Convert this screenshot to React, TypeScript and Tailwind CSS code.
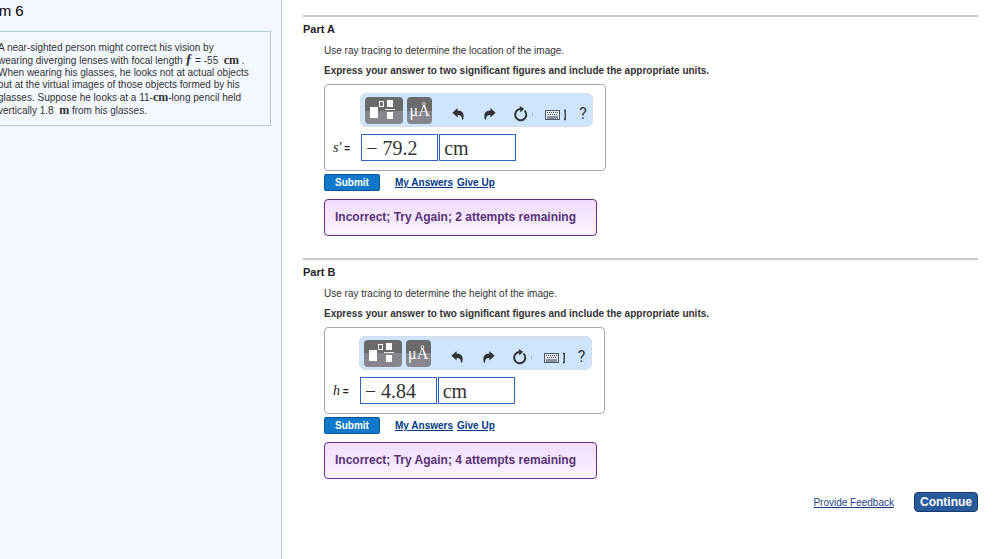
import type { ReactNode } from "react";

type PartProps = {
  id: string;
  title: string;
  question: string;
  symbol: ReactNode;
  value: string;
  unit: string;
  attempts: number;
};

function TemplateIcon() {
  return (
    <svg width="38" height="27" viewBox="0 0 38 27" aria-hidden="true">
      <rect x="5" y="10" width="8" height="11" fill="#fff" />
      <rect x="14.5" y="4.5" width="4" height="5" fill="none" stroke="#fff" />
      <rect x="22" y="3" width="6" height="7" fill="#fff" />
      <rect x="20" y="12" width="10" height="1" fill="#eee" />
      <rect x="22" y="15" width="6" height="7" fill="#fff" />
    </svg>
  );
}

function CurvedArrow({ className = "" }: { className?: string }) {
  return (
    <svg className={className} width="13" height="14" viewBox="0 0 13 14" fill="#333" aria-hidden="true">
      <path d="M0.4 5.8 L5.6 1 V3.6 C10.4 3.7 12.4 6.3 11.4 12 L10 13 C10 9.6 9 8 5.6 8 V10.4 Z" />
    </svg>
  );
}

function ResetIcon() {
  return (
    <svg width="20" height="16" viewBox="0 0 20 16" aria-hidden="true">
      <path d="M11.6 4.6 A5.6 5.6 0 1 1 7 3.1" fill="none" stroke="#333" strokeWidth="2" />
      <path d="M6.6 0 L11.2 2.8 L7.4 6.4 Z" fill="#333" />
      <rect x="19" y="7" width="1" height="3" fill="#a9b8cc" />
    </svg>
  );
}

function KeyboardIcon() {
  return (
    <svg width="22" height="14" viewBox="0 0 22 14" aria-hidden="true">
      <rect x="0.5" y="3.5" width="14" height="9" fill="#e6e9ee" stroke="#555b66" />
      <path d="M2 5.5H13" stroke="#555b66" strokeDasharray="1 1" />
      <path d="M3 7.5H13" stroke="#555b66" strokeDasharray="1 1" />
      <rect x="2" y="9" width="11" height="3" fill="#8b93a0" />
      <path d="M19 3.5 H20.2 V12.5 H19" fill="none" stroke="#333" strokeWidth="1.3" />
    </svg>
  );
}

function Toolbar() {
  return (
    <div className="flex h-[34px] w-[233px] items-end rounded-md border border-[#d9dde2] bg-[#cfe5ff] px-1 pb-[2px] text-[#333]">
      <div className="flex gap-1">
        <button type="button" aria-label="Templates" className="h-[27px] rounded-sm bg-linear-to-b from-[#6a6a6a] from-50% to-[#86868c] to-50%">
          <TemplateIcon />
        </button>
        <button type="button" aria-label="Units" className="h-[27px] w-[25px] rounded-sm bg-linear-to-b from-[#6a6a6a] from-50% to-[#86868c] to-50% font-['Liberation_Serif',serif] text-base text-white">
          μÅ
        </button>
      </div>
      <div className="ml-5 flex flex-1 items-center">
        <button type="button" aria-label="Undo">
          <CurvedArrow />
        </button>
        <button type="button" aria-label="Redo" className="ml-[18px]">
          <CurvedArrow className="-scale-x-100" />
        </button>
        <button type="button" aria-label="Reset" className="ml-[17px]">
          <ResetIcon />
        </button>
        <button type="button" aria-label="Keyboard shortcuts" className="ml-3">
          <KeyboardIcon />
        </button>
        <button type="button" aria-label="Help" className="ml-3 font-[Roboto,sans-serif] text-base leading-5">
          ?
        </button>
      </div>
    </div>
  );
}

function Part({ id, title, question, symbol, value, unit, attempts }: PartProps) {
  const field =
    "h-[27px] w-[77px] border border-[#2f62c4] bg-white pl-1 font-['Liberation_Serif',serif] text-xl text-[#333]";

  return (
    <section className="border-t-2 border-[#c8c8c8] pt-1">
      <h2 className="text-[11px] leading-4 font-bold text-[#222]">{title}</h2>
      <div className="ml-[21px]">
        <p className="mt-[6px] text-[10px] leading-4">{question}</p>
        <p className="mt-1 text-[10px] leading-4 font-bold">
          Express your answer to two significant figures and include the appropriate units.
        </p>
        <div className="mt-[5px] grid w-fit grid-cols-[auto_auto] items-center gap-x-[10px] gap-y-[7px] rounded-sm border border-[#a8a8a8] pt-2 pr-3 pb-[9px] pl-2">
          <div className="col-start-2">
            <Toolbar />
          </div>
          <label htmlFor={`${id}-value`} className="text-[10px] font-bold text-[#222]">
            <i className="font-['Liberation_Serif',serif] text-sm font-normal">{symbol}</i> =
          </label>
          <div className="flex gap-px pl-px">
            <input id={`${id}-value`} defaultValue={value} className={field} />
            <input aria-label="Units" defaultValue={unit} className={field} />
          </div>
        </div>
        <div className="mt-[3px] flex items-center text-[10px] font-bold">
          <button type="button" className="h-[17px] w-14 rounded-xs border border-[#0a5590] bg-[#1079cb] text-white">
            Submit
          </button>
          <a href="#answers" className="ml-[15px] text-[#003a85] underline">My Answers</a>
          <a href="#give-up" className="ml-1 text-[#003a85] underline">Give Up</a>
        </div>
        <p className="mt-2 w-fit min-w-[273px] rounded-sm border border-[#6c2c86] bg-linear-to-b from-[#f0dcff] to-[#fcf3ff] px-[10px] py-2 text-xs leading-[19px] font-bold text-[#573373]">
          Incorrect; Try Again; {attempts} attempts remaining
        </p>
      </div>
    </section>
  );
}

export default function App() {
  const math = "font-['Liberation_Serif',serif] text-xs leading-3 font-bold";

  return (
    <div className="flex min-h-screen bg-white font-['Liberation_Sans',Arial,sans-serif] text-[#333]">
      <aside className="w-[282px] shrink-0 overflow-hidden border-r border-[#b8c9dc] bg-[#f3f8ff]">
        <h1 className="-ml-[18px] pt-[2px] text-[15px] leading-[18px] text-black">Item 6</h1>
        <div className="-ml-4 mt-[11px] mr-[10px] border border-[#b8c9dc] pt-[10px] pb-2 pl-[13px] text-[10px] leading-3">
          <p>
            A near-sighted person might correct his vision by<br />
            wearing diverging lenses with focal length{" "}
            <i className="font-['Liberation_Serif',serif] text-sm leading-3 font-bold">ƒ</i> = -55 &nbsp;
            <span className={math}>cm</span> .<br />
            When wearing his glasses, he looks not at actual objects<br />
            but at the virtual images of those objects formed by his<br />
            glasses. Suppose he looks at a 11-
            <span className={math}>cm</span>-long pencil held<br />
            vertically 1.8 &nbsp;
            <span className={math}>m</span> from his glasses.
          </p>
        </div>
      </aside>
      <main className="flex-1 pt-[15px] pr-[18px] pl-[21px]">
        <div className="flex flex-col gap-[22px]">
          <Part
            id="part-a"
            title="Part A"
            question="Use ray tracing to determine the location of the image."
            symbol="s′"
            value="− 79.2"
            unit="cm"
            attempts={2}
          />
          <Part
            id="part-b"
            title="Part B"
            question="Use ray tracing to determine the height of the image."
            symbol="h"
            value="− 4.84"
            unit="cm"
            attempts={4}
          />
        </div>
        <div className="mt-[13px] flex items-center justify-end gap-5 text-[10px]">
          <a href="#feedback" className="text-[#1b3f85] underline">Provide Feedback</a>
          <button type="button" className="h-5 w-16 rounded-sm border border-[#103a70] bg-[#285a9c] text-xs font-bold text-white">
            Continue
          </button>
        </div>
      </main>
    </div>
  );
}
